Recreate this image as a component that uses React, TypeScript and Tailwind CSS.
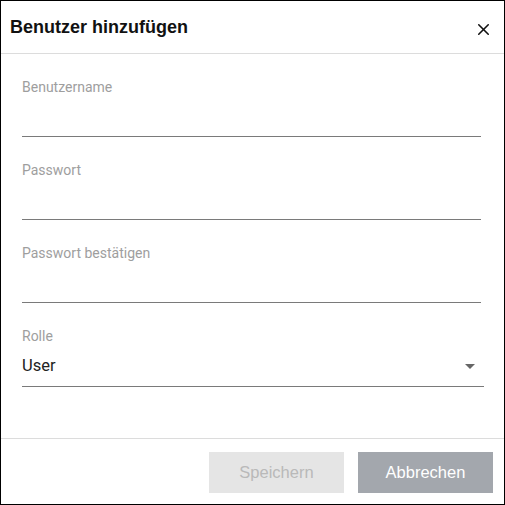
import { X } from 'lucide-react'

function Field({ label, type = 'text' }: { label: string; type?: string }) {
  return (
    <div className="mb-[25px]">
      <label className="block h-4 text-[14px] leading-4 text-[#9e9e9e]">{label}</label>
      <input
        type={type}
        className="block h-[42px] w-[459px] border-b border-[#7a7a7a] bg-transparent text-[16px] text-[#222] outline-none"
      />
    </div>
  )
}

export default function App() {
  return (
    <div
      className="flex h-[505px] w-[505px] flex-col border border-black bg-white"
      style={{ fontFamily: 'Roboto, "Liberation Sans", sans-serif' }}
    >
      {/* Kopfzeile */}
      <div className="flex h-[53px] shrink-0 items-center justify-between border-b border-[#dcdcdc] pl-[9px] pr-[11px]">
        <h1 className="font-['Liberation_Sans',Arial,sans-serif] text-[18px] font-bold text-[#111]">
          Benutzer hinzufügen
        </h1>
        <button type="button" className="mt-[4px] text-[#111]">
          <X className="h-[19px] w-[19px]" strokeWidth={2} />
        </button>
      </div>

      {/* Formular */}
      <div className="flex-1 pl-[21px] pt-[25px]">
        <Field label="Benutzername" />
        <Field label="Passwort" type="password" />
        <Field label="Passwort bestätigen" type="password" />
        <div>
          <label className="block h-4 text-[14px] leading-4 text-[#9e9e9e]">Rolle</label>
          <div className="flex h-[43px] w-[462px] items-center justify-between border-b border-[#7a7a7a] pr-[9px] pt-[3px]">
            <span className="text-[16.5px] text-[#222]">User</span>
            <svg width="10" height="5" viewBox="0 0 10 5">
              <path d="M0 0h10L5 5z" fill="#666" />
            </svg>
          </div>
        </div>
      </div>

      {/* Fußzeile */}
      <div className="flex h-[66px] shrink-0 justify-end gap-[14px] border-t border-[#dcdcdc] pr-[11px] pt-[13px] font-['Liberation_Sans',Arial,sans-serif]">
        <button type="button" disabled className="h-[41px] w-[135px] bg-[#e5e5e5] text-[16.5px] text-[#b9b9b9]">
          Speichern
        </button>
        <button type="button" className="h-[41px] w-[135px] bg-[#a3a7ad] text-[16.5px] text-white">
          Abbrechen
        </button>
      </div>
    </div>
  )
}
